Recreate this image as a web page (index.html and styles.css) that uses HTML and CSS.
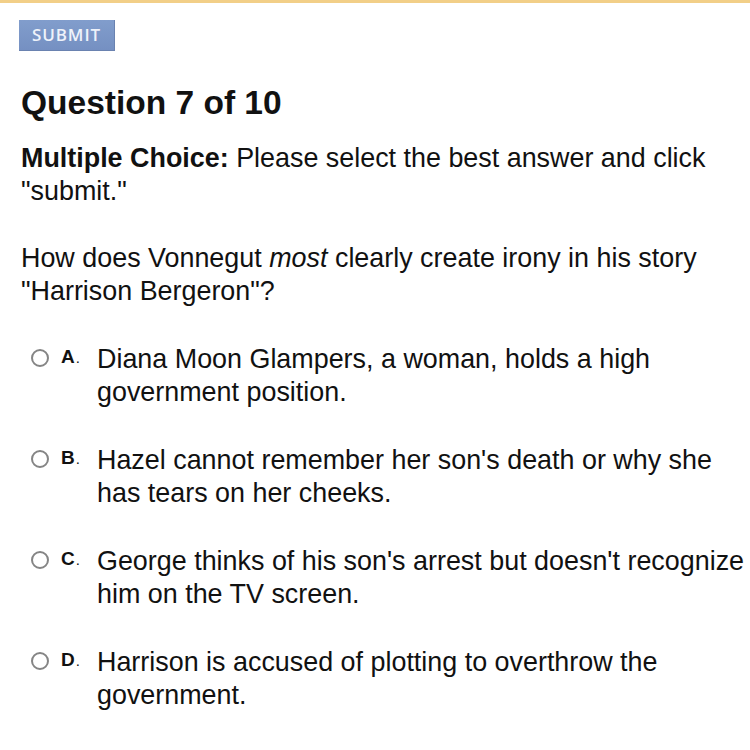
FILE: index.html
```html
<!DOCTYPE html>
<html>
<head>
<meta charset="utf-8">
<link rel="stylesheet" href="styles.css">
</head>
<body>
<div class="topline"></div>
<div class="page">
  <div class="submit">SUBMIT</div>
  <h1 class="title">Question 7 of 10</h1>
  <p class="instr"><b>Multiple Choice:</b> Please select the best answer and click "submit."</p>
  <p class="question">How does Vonnegut <i>most</i> clearly create irony in his story "Harrison Bergeron"?</p>
  <div class="options">
    <div class="option"><span class="radio"></span><span class="letter">A<span class="dot">.</span></span><span class="text">Diana Moon Glampers, a woman, holds a high government position.</span></div>
    <div class="option"><span class="radio"></span><span class="letter">B<span class="dot">.</span></span><span class="text">Hazel cannot remember her son's death or why she has tears on her cheeks.</span></div>
    <div class="option"><span class="radio"></span><span class="letter">C<span class="dot">.</span></span><span class="text">George thinks of his son's arrest but doesn't recognize him on the TV screen.</span></div>
    <div class="option"><span class="radio"></span><span class="letter">D<span class="dot">.</span></span><span class="text">Harrison is accused of plotting to overthrow the government.</span></div>
  </div>
</div>
</body>
</html>
```
FILE: styles.css
```css
html, body { margin: 0; padding: 0; background: #fff; }
body { font-family: "Liberation Sans", Arial, sans-serif; color: #111; width: 750px; overflow: hidden; }
.topline { height: 3px; background: #f2cf88; }
.page { padding: 17px 0 0 21px; }
.submit {
  display: inline-block;
  width: 96px; height: 31px;
  box-sizing: border-box;
  background: linear-gradient(#819dcc, #7590c2);
  border-right: 1px solid #6a82b0;
  border-bottom: 1px solid #6a82b0;
  color: #eef2fa;
  font-family: "Open Sans", "DejaVu Sans", sans-serif;
  font-size: 17px;
  font-weight: 600;
  letter-spacing: 0.9px;
  line-height: 30px;
  text-align: center;
  margin-left: -2px;
}
.title { font-size: 33.5px; font-weight: bold; margin: 32px 0 0; line-height: 40px; }
.instr { font-size: 26.9px; line-height: 33px; margin: 19px 0 0; width: 720px; }
.question { font-size: 26.9px; line-height: 33px; margin: 34px 0 0; width: 700px; }
.options { margin-top: 35px; padding-left: 10px; display: flex; flex-direction: column; gap: 35px; }
.option { display: flex; align-items: flex-start; }
.radio {
  width: 14px; height: 14px; border: 2px solid #858585; border-radius: 50%;
  margin-top: 6px; flex: none; box-sizing: content-box;
}
.letter { font-size: 19px; font-weight: bold; width: 48px; padding-left: 12px; box-sizing: border-box; flex: none; line-height: 27px; }
.dot { font-weight: normal; font-size: 15px; margin-left: 1px; }
.text { font-size: 26.9px; line-height: 33px; width: 650px; }
```
